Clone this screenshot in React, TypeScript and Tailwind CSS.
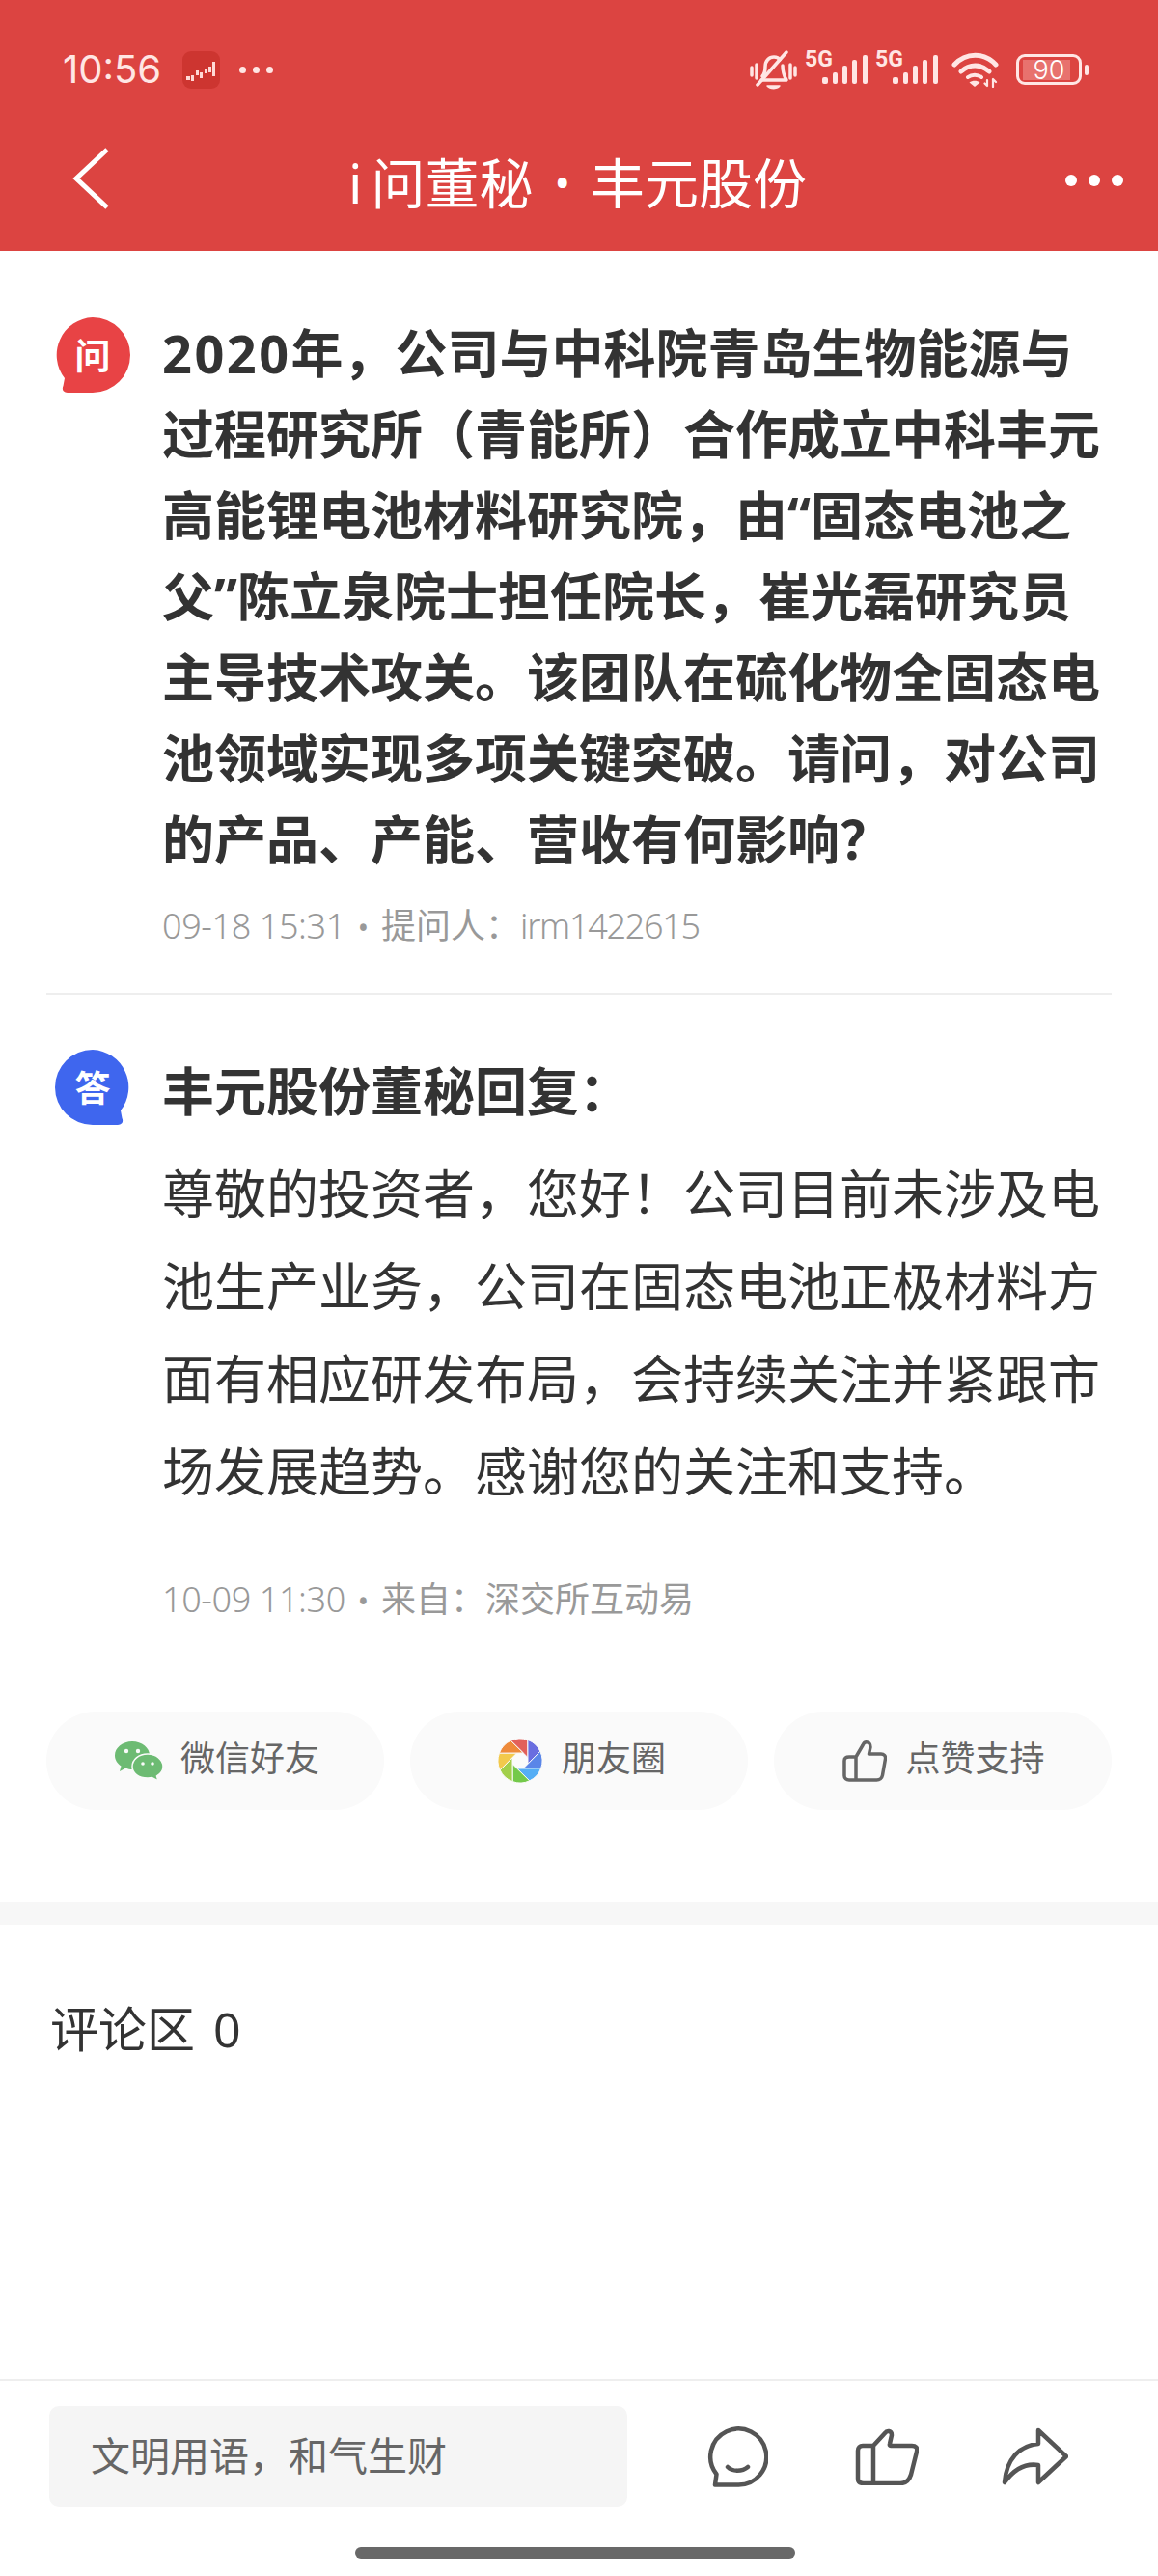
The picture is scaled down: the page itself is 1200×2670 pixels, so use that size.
const question = [
  '年，公司与中科院青岛生物能源与',
  '过程研究所（青能所）合作成立中科丰元',
  '高能锂电池材料研究院，由“固态电池之',
  '父”陈立泉院士担任院长，崔光磊研究员',
  '主导技术攻关。该团队在硫化物全固态电',
  '池领域实现多项关键突破。请问，对公司',
  '的产品、产能、营收有何影响？',
];

const answer = [
  '尊敬的投资者，您好！公司目前未涉及电',
  '池生产业务，公司在固态电池正极材料方',
  '面有相应研发布局，会持续关注并紧跟市',
  '场发展趋势。感谢您的关注和支持。',
];

function Bubble({ label, color, side }: { label: string; color: string; side: 'left' | 'right' }) {
  return (
    <div className="relative w-[78px] h-[78px] shrink-0">
      <svg viewBox="0 0 78 78" className={side === 'right' ? 'w-full h-full -scale-x-100' : 'w-full h-full'}>
        <path
          d="M39 0A39 39 0 1 1 39 78H13C8 78 7 74 8.500 71L10 63A39 39 0 0 1 39 0Z"
          fill={color}
        />
      </svg>
      <span className="absolute inset-0 flex items-center justify-center text-white font-bold text-[37px] leading-none">
        {label}
      </span>
    </div>
  );
}

function MuteIcon() {
  return (
    <svg viewBox="0 0 49 41" className="w-[49px] h-[41px]" fill="none" stroke="#ffe6e4" strokeWidth="3.500" strokeLinecap="round" strokeLinejoin="round">
      <path d="M2 18v8M7 15v14M42 15v14M47 18v8" />
      <path d="M13 27c2-2 3-5 3-10 0-6 4-10 9-10 3 0 5 1 6 3" />
      <path d="M34 16c0 6 1 10 4 15H12" />
      <path d="M8 36 38 2" />
      <path d="M18 37h13c-2 3.500-10 3.500-13 0Z" fill="#ffe6e4" strokeWidth="1.500" />
    </svg>
  );
}

function FiveGSignal() {
  return (
    <div className="relative w-[65px] h-[34px]">
      <span className="absolute left-0 top-[-4px] text-[#ffe6e4] text-[23px] leading-[22px] font-bold font-['Roboto',sans-serif]">5G</span>
      <svg viewBox="0 0 47 30" className="absolute left-[18px] top-[2px] w-[47px] h-[30px]" fill="#ffe6e4">
        <rect x="0" y="23" width="6" height="7" rx="2" />
        <rect x="11" y="18" width="5" height="12" rx="2" />
        <rect x="21" y="11" width="5" height="19" rx="2" />
        <rect x="31" y="5" width="5" height="25" rx="2" />
        <rect x="42" y="0" width="5" height="30" rx="2" />
      </svg>
    </div>
  );
}

function WifiIcon() {
  return (
    <svg viewBox="0 0 49 37" className="w-[49px] h-[37px]" fill="none" stroke="#ffe6e4" strokeWidth="5" strokeLinecap="round">
      <path d="M3 13C15 0 34 0 46 13" />
      <path d="M10 20c9-8 20-8 29 0" />
      <path d="M17 26c4-3 10-3 14 0" strokeWidth="4" />
      <path d="M24 36 18.500 31.500c3-2.500 8-2.500 11 0Z" fill="#ffe6e4" stroke="none" />
      <path d="M37 35v-6M34.500 32.500l2.500 2.500M43 36v-8M43 28l3 3" strokeWidth="2.200" />
    </svg>
  );
}

function Battery() {
  return (
    <div className="flex items-center gap-[3px]">
      <div className="relative w-[68px] h-[32px] border-[3px] border-[#ffe6e4] rounded-[9px]">
        <div className="absolute left-[4px] top-[3px] bottom-[2px] w-[49px] bg-[#e8726e]" />
        <span className="absolute inset-0 flex items-center justify-center text-white text-[27px] leading-none font-['Inter',sans-serif] font-light">
          90
        </span>
      </div>
      <div className="w-[4px] h-[11px] bg-[#ffe6e4] rounded-[2px]" />
    </div>
  );
}

function ChartAppIcon() {
  return (
    <svg viewBox="0 0 39 39" className="w-[39px] h-[39px]">
      <rect width="39" height="39" rx="9" fill="#cd3530" />
      <g fill="#ffd9d6">
        <rect x="4" y="26" width="4" height="4" />
        <rect x="9" y="25" width="3" height="6" />
        <rect x="14" y="20" width="3" height="5" />
        <rect x="18" y="22" width="3" height="6" />
        <rect x="23" y="19" width="3" height="4" />
        <rect x="27" y="16" width="3" height="6" />
        <rect x="31" y="11" width="3" height="15" />
      </g>
    </svg>
  );
}

function WechatIcon() {
  return (
    <svg viewBox="0 0 50 41" className="w-[50px] h-[41px]">
      <path d="M18 0C8 0 0 6.500 0 14.500 0 19 2.500 23 6.500 25.500L5 31 11.500 27.500C13.500 28.500 16 29 18 29 28 29 36 22.500 36 14.500 36 6.500 28 0 18 0Z" fill="#6dbb73" />
      <circle cx="12" cy="10" r="2.200" fill="#fafafa" />
      <circle cx="24" cy="10" r="2.200" fill="#fafafa" />
      <path d="M34 13C24.500 13 18 19 18 26 18 33 24.500 38 34 38 35.500 38 37 38 38.500 37.500L45 41 43.500 36C47.500 33.500 50 30 50 26 50 19 43 13 34 13Z" fill="#6dbb73" stroke="#fafafa" strokeWidth="1.500" />
      <circle cx="29" cy="23" r="1.800" fill="#fafafa" />
      <circle cx="39" cy="23" r="1.800" fill="#fafafa" />
    </svg>
  );
}

const bladeColors = ['#e2605a', '#6a6ee0', '#5a86e8', '#55aef5', '#74c94a', '#a2cf4a', '#f2c94c', '#ee8a3a'];

function ApertureIcon() {
  const R = 23;
  const hole = 8;
  const offset = (Math.acos(hole / R) * 180) / Math.PI;
  const point = (r: number, deg: number) => {
    const a = ((deg - 90) * Math.PI) / 180;
    return `${(23 + r * Math.cos(a)).toFixed(2)} ${(23 + r * Math.sin(a)).toFixed(2)}`;
  };
  return (
    <svg viewBox="0 0 46 46" className="w-[46px] h-[46px]">
      {bladeColors.map((color, i) => {
        const start = -25 + i * 45;
        const tip = point(hole / Math.cos((22.5 * Math.PI) / 180), start + offset + 22.5);
        return (
          <path
            key={color}
            d={`M${point(R, start)}A${R} ${R} 0 0 1 ${point(R, start + 45)}L${tip}Z`}
            fill={color}
            stroke="#fafafa"
            strokeWidth="1"
          />
        );
      })}
    </svg>
  );
}

function ActionButton({ icon, label, className }: { icon: React.ReactNode; label: string; className: string }) {
  return (
    <div className={`w-[350px] h-[102px] rounded-full bg-[#fafafa] flex items-center justify-center ${className}`}>
      {icon}
      <span className="mb-[4px] text-[36px] leading-none text-[#666666]">{label}</span>
    </div>
  );
}

function Meta({ time, label, id }: { time: string; label: string; id?: string }) {
  return (
    <p className="text-[36px] leading-[50px] text-[#999999] whitespace-nowrap">
      <span className="font-light tracking-[-0.4px]">{time}</span>
      <span className="ml-[13px] mr-[13px] text-[30px]">•</span>
      <span>{label}</span>
      {id && <span className="font-light tracking-[-1.3px]">{id}</span>}
    </p>
  );
}

export default function App() {
  return (
    <div className="relative w-[1200px] h-[2670px] bg-white flex flex-col overflow-hidden text-[#333333] font-['Noto_Sans','Noto_Sans_CJK_SC',sans-serif]">
      <header className="h-[260px] shrink-0 bg-[#dc4441] flex flex-col">
        <div className="h-[40px] mt-[52px] flex items-center justify-between pl-[65px] pr-[72px]">
          <div className="flex items-center">
            <span className="text-[40px] leading-none text-[#ffe6e4] font-['Inter',sans-serif]">10:56</span>
            <div className="ml-[22px]">
              <ChartAppIcon />
            </div>
            <div className="ml-[20px] flex gap-[7px]">
              <span className="w-[7px] h-[7px] rounded-full bg-[#ffe6e4]" />
              <span className="w-[7px] h-[7px] rounded-full bg-[#ffe6e4]" />
              <span className="w-[7px] h-[7px] rounded-full bg-[#ffe6e4]" />
            </div>
          </div>
          <div className="flex items-center">
            <MuteIcon />
            <div className="ml-[8px]">
              <FiveGSignal />
            </div>
            <div className="ml-[8px]">
              <FiveGSignal />
            </div>
            <div className="ml-[14px]">
              <WifiIcon />
            </div>
            <div className="ml-[18px]">
              <Battery />
            </div>
          </div>
        </div>
        <div className="flex-1 flex items-center pt-[26px]">
          <div className="w-[198px] pl-[74px] mb-[8px]">
            <svg viewBox="0 0 40 64" className="w-[40px] h-[64px]" fill="none" stroke="#ffffff" strokeWidth="5">
              <path d="M37 2 5 32l32 30" />
            </svg>
          </div>
          <h1 className="flex-1 flex items-center justify-center text-white text-[56px] leading-none font-normal whitespace-nowrap">
            <span>i</span>
            <span className="ml-[9px]">问董秘</span>
            <span className="ml-[22px] text-[44px]">•</span>
            <span className="ml-[21px]">丰元股份</span>
          </h1>
          <div className="w-[201px] pr-[36px] mb-[4px] flex justify-end gap-[12px]">
            <span className="w-[12px] h-[12px] rounded-full bg-white" />
            <span className="w-[12px] h-[12px] rounded-full bg-white" />
            <span className="w-[12px] h-[12px] rounded-full bg-white" />
          </div>
        </div>
      </header>

      <section className="flex pl-[57px] pt-[64px] gap-[33px]">
        <div className="mt-[5px]">
          <Bubble label="问" color="#e84345" side="left" />
        </div>
        <div>
          <div className="text-[54px] leading-[84px] font-bold">
            {question.map((line, i) => (
              <div key={line} className="whitespace-nowrap">
                {i === 0 && <span className="tracking-[2.5px]">2020</span>}
                {line}
              </div>
            ))}
          </div>
          <div className="mt-[23px]">
            <Meta time="09-18 15:31" label="提问人：" id="irm1422615" />
          </div>
        </div>
      </section>

      <div className="mx-[48px] mt-[42px] h-[2px] bg-[#eeeeee]" />

      <section className="flex pl-[57px] pt-[57px] gap-[33px]">
        <Bubble label="答" color="#3f66ee" side="right" />
        <div>
          <h2 className="mt-[1px] text-[54px] leading-[84px] font-bold">丰元股份董秘回复：</h2>
          <div className="mt-[16px] text-[54px] leading-[96px]">
            {answer.map(line => (
              <div key={line} className="whitespace-nowrap">{line}</div>
            ))}
          </div>
          <div className="mt-[60px]">
            <Meta time="10-09 11:30" label="来自：深交所互动易" />
          </div>
        </div>
      </section>

      <div className="mt-[89px] px-[48px] flex justify-between">
        <ActionButton icon={<WechatIcon />} label="微信好友" className="pl-[4px] gap-[18px]" />
        <ActionButton icon={<ApertureIcon />} label="朋友圈" className="pl-[6px] gap-[20px]" />
        <ActionButton
          icon={
            <svg viewBox="0 0 46 44" className="w-[46px] h-[44px]" fill="none" stroke="#666666" strokeWidth="3.500" strokeLinejoin="round" strokeLinecap="round">
              <path d="M14 18 21 6C23 1 29 2 29 8L27.500 15H40C43 15 45 17 44.500 20L41.500 37C41 40 38.500 42 35.500 42H7C4 42 2 40 2 37.500V22C2 19.500 4 18 7 18H14V42" />
            </svg>
          }
          label="点赞支持"
          className="pl-[2px] gap-[19px]"
        />
      </div>

      <div className="mt-[95px] h-[24px] shrink-0 bg-[#f7f7f7]" />

      <h3 className="mt-[73px] pl-[52px] text-[50px] leading-[70px] font-normal">
        评论区<span className="ml-[19px]">0</span>
      </h3>

      <div className="flex-1" />

      <footer className="h-[204px] shrink-0 border-t-2 border-[#eeeeee] flex flex-col">
        <div className="mt-[26px] pl-[51px] flex items-center">
          <div className="w-[599px] h-[104px] rounded-[10px] bg-[#f5f5f5] flex items-center pl-[43px] pb-[2px] text-[41px] leading-none text-[#666666]">
            文明用语，和气生财
          </div>
          <svg viewBox="0 0 63 63" className="ml-[83px] w-[63px] h-[63px]" fill="none" stroke="#555555" strokeWidth="4.500" strokeLinejoin="round" strokeLinecap="round">
            <path d="M8 60.500H31.500A29 29 0 1 0 9.500 49.500Z" />
            <path d="M21 42c5 5 15 5 21 0" />
          </svg>
          <svg viewBox="0 0 66 60" className="ml-[90px] w-[66px] h-[60px]" fill="none" stroke="#555555" strokeWidth="4.500" strokeLinejoin="round" strokeLinecap="round">
            <path d="M19 19 31 6C33 3 38 3 38 8L36 17Q35.500 19 37 19H59C63 19 65 21 64 25L58 49C56 55 52 58 47 58H9C5 58 3 56 3 53V24C3 21 5 19 8 19H19V58" />
          </svg>
          <svg viewBox="0 0 69 60" className="ml-[86px] w-[69px] h-[60px]" fill="none" stroke="#555555" strokeWidth="4.500" strokeLinejoin="round" strokeLinecap="round">
            <path d="M38 3 67 30 38 57V39Q18 36 3 57C5 33 18 19 38 17Z" />
          </svg>
        </div>
        <div className="mt-[42px] ml-[368px] w-[456px] h-[12px] rounded-full bg-[#686868]" />
      </footer>
    </div>
  );
}
